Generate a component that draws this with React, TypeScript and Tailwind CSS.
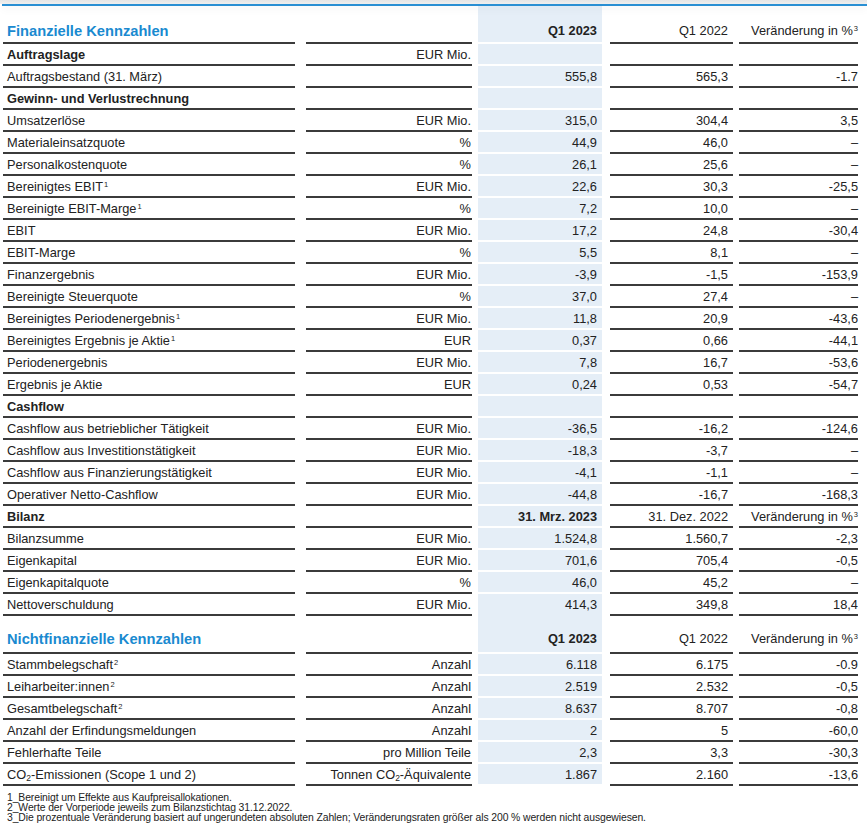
import type { ReactNode } from "react";

type Cell = ReactNode;

const COL_BASE = [
  "w-[292px] pl-[4px] justify-start border-[#3b3b3b]",
  "ml-[11px] w-[166px] pr-[1px] justify-end border-[#3b3b3b]",
  "ml-[6px] w-[124px] pr-[5px] justify-end bg-[#e5eef7]",
  "ml-[8px] w-[123px] pr-[5px] justify-end border-[#3b3b3b]",
  "ml-[6px] w-[119px] justify-end border-[#3b3b3b]",
];

const Sup = ({ n }: { n: string }) => <sup className="text-[7.5px] ml-[1px]">{n}</sup>;
const CO2 = () => (
  <>
    CO<sub className="text-[8.5px]">2</sub>
  </>
);

function Header({
  title,
  c3,
  c4,
  c5,
  lifted,
}: {
  title: string;
  c3: string;
  c4: string;
  c5: ReactNode;
  lifted?: boolean;
}) {
  return (
    <div className="flex h-[38px]">
      {[
        <span className="text-[14.7px] font-bold text-[#1a8ad0] leading-[18px]">{title}</span>,
        "",
        <span className="font-bold">{c3}</span>,
        c4,
        c5,
      ].map((c, i) => (
        <div
          key={i}
          className={`flex items-end border-b-2 ${COL_BASE[i]} ${i === 2 ? "border-white" : ""} ${
            i === 0 ? (lifted ? "pb-[4px]" : "pb-[2px]") : lifted ? "pb-[5px]" : "pb-[3px]"
          }`}
        >
          {c}
        </div>
      ))}
    </div>
  );
}

function Row({ cells, bold, noGap }: { cells: Cell[]; bold?: boolean; noGap?: boolean }) {
  return (
    <div className="flex h-[22px]">
      {cells.map((c, i) => (
        <div
          key={i}
          className={`flex items-center pt-[3px] border-b-2 ${COL_BASE[i]} ${
            i === 2 ? (noGap ? "border-transparent" : "border-white") : ""
          } ${bold && i === 0 ? "font-bold" : ""}`}
        >
          {c}
        </div>
      ))}
    </div>
  );
}

const veraenderung = (
  <span>
    Veränderung in %<Sup n="3" />
  </span>
);

const finRows: { cells: Cell[]; bold?: boolean }[] = [
  { cells: ["Auftragslage", "EUR Mio.", "", "", ""], bold: true },
  { cells: ["Auftragsbestand (31. März)", "", "555,8", "565,3", "-1.7"] },
  { cells: ["Gewinn- und Verlustrechnung", "", "", "", ""], bold: true },
  { cells: ["Umsatzerlöse", "EUR Mio.", "315,0", "304,4", "3,5"] },
  { cells: ["Materialeinsatzquote", "%", "44,9", "46,0", "–"] },
  { cells: ["Personalkostenquote", "%", "26,1", "25,6", "–"] },
  { cells: [<span>Bereinigtes EBIT<Sup n="1" /></span>, "EUR Mio.", "22,6", "30,3", "-25,5"] },
  { cells: [<span>Bereinigte EBIT-Marge<Sup n="1" /></span>, "%", "7,2", "10,0", "–"] },
  { cells: ["EBIT", "EUR Mio.", "17,2", "24,8", "-30,4"] },
  { cells: ["EBIT-Marge", "%", "5,5", "8,1", "–"] },
  { cells: ["Finanzergebnis", "EUR Mio.", "-3,9", "-1,5", "-153,9"] },
  { cells: ["Bereinigte Steuerquote", "%", "37,0", "27,4", "–"] },
  { cells: [<span>Bereinigtes Periodenergebnis<Sup n="1" /></span>, "EUR Mio.", "11,8", "20,9", "-43,6"] },
  { cells: [<span>Bereinigtes Ergebnis je Aktie<Sup n="1" /></span>, "EUR", "0,37", "0,66", "-44,1"] },
  { cells: ["Periodenergebnis", "EUR Mio.", "7,8", "16,7", "-53,6"] },
  { cells: ["Ergebnis je Aktie", "EUR", "0,24", "0,53", "-54,7"] },
  { cells: ["Cashflow", "", "", "", ""], bold: true },
  { cells: ["Cashflow aus betrieblicher Tätigkeit", "EUR Mio.", "-36,5", "-16,2", "-124,6"] },
  { cells: ["Cashflow aus Investitionstätigkeit", "EUR Mio.", "-18,3", "-3,7", "–"] },
  { cells: ["Cashflow aus Finanzierungstätigkeit", "EUR Mio.", "-4,1", "-1,1", "–"] },
  { cells: ["Operativer Netto-Cashflow", "EUR Mio.", "-44,8", "-16,7", "-168,3"] },
  {
    cells: ["Bilanz", "", <span className="font-bold">31. Mrz. 2023</span>, "31. Dez. 2022", veraenderung],
    bold: true,
  },
  { cells: ["Bilanzsumme", "EUR Mio.", "1.524,8", "1.560,7", "-2,3"] },
  { cells: ["Eigenkapital", "EUR Mio.", "701,6", "705,4", "-0,5"] },
  { cells: ["Eigenkapitalquote", "%", "46,0", "45,2", "–"] },
];

const nonFinRows: Cell[][] = [
  [<span>Stammbelegschaft<Sup n="2" /></span>, "Anzahl", "6.118", "6.175", "-0.9"],
  [<span>Leiharbeiter:innen<Sup n="2" /></span>, "Anzahl", "2.519", "2.532", "-0,5"],
  [<span>Gesamtbelegschaft<Sup n="2" /></span>, "Anzahl", "8.637", "8.707", "-0,8"],
  ["Anzahl der Erfindungsmeldungen", "Anzahl", "2", "5", "-60,0"],
  ["Fehlerhafte Teile", "pro Million Teile", "2,3", "3,3", "-30,3"],
  [
    <span>
      <CO2 />-Emissionen (Scope 1 und 2)
    </span>,
    <span>
      Tonnen <CO2 />-Äquivalente
    </span>,
    "1.867",
    "2.160",
    "-13,6",
  ],
];

export default function App() {
  return (
    <div className="w-[867px] h-[838px] bg-white text-[#222] text-[12.8px] leading-[16px] overflow-hidden [font-family:'Liberation_Sans',Arial,sans-serif]">
      {/* top bar */}
      <div className="h-[4px] bg-gradient-to-b from-[#e6e6e6] to-[#f2f2f2]" />
      <div className="relative z-10 ml-[2px] h-[1.5px] bg-[#2a8fd3] shadow-[0_2px_8px_rgba(0,0,0,0.10)]" />

      <div className="ml-[3px]">
        <Header title="Finanzielle Kennzahlen" c3="Q1 2023" c4="Q1 2022" c5={veraenderung} />
        {finRows.map((r, i) => (
          <Row key={i} cells={r.cells} bold={r.bold} />
        ))}
        <Row cells={["Nettoverschuldung", "EUR Mio.", "414,3", "349,8", "18,4"]} noGap />

        <Header title="Nichtfinanzielle Kennzahlen" c3="Q1 2023" c4="Q1 2022" c5={veraenderung} lifted />
        {nonFinRows.map((r, i) => (
          <Row key={i} cells={r} />
        ))}
      </div>

      {/* footnotes */}
      <div className="mt-[7px] pl-[7px] text-[10.4px] leading-[10px] tracking-[-0.1px]">
        <p>1_Bereinigt um Effekte aus Kaufpreisallokationen.</p>
        <p>2_Werte der Vorperiode jeweils zum Bilanzstichtag 31.12.2022.</p>
        <p>
          3_Die prozentuale Veränderung basiert auf ungerundeten absoluten Zahlen; Veränderungsraten größer als 200 % werden
          nicht ausgewiesen.
        </p>
      </div>
    </div>
  );
}
